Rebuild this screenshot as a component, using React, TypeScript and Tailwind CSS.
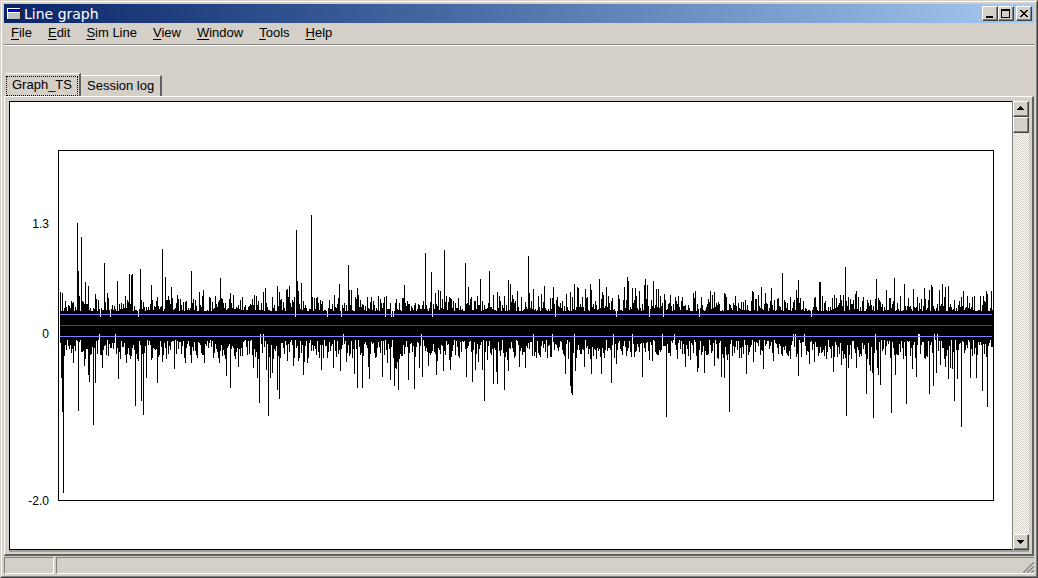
import React, { useState } from 'react';

const MENUS = ['File', 'Edit', 'Sim Line', 'View', 'Window', 'Tools', 'Help'];
const TABS = ['Graph_TS', 'Session log'];

const PLOT = { left: 59, right: 993, top: 151, bottom: 500 };

// [x, tip] of the samples that stand out above the band
const HIGHS: [number, number][] = [
  [60, 292], [62, 293], [77, 223], [78, 271], [81, 237], [85, 282], [88, 286],
  [95, 294], [104, 263], [107, 293], [117, 281], [129, 274], [131, 275],
  [132, 274], [140, 269], [151, 285], [157, 297], [162, 249], [165, 277],
  [168, 296], [171, 287], [177, 295], [191, 271], [199, 292], [203, 290],
  [209, 297], [220, 278], [230, 293], [233, 295], [242, 297], [254, 295],
  [263, 292], [265, 288], [277, 286], [279, 292], [286, 290], [287, 289],
  [289, 286], [296, 230], [297, 281], [298, 291], [301, 283], [311, 215],
  [334, 295], [339, 284], [348, 265], [349, 290], [351, 290], [357, 288],
  [358, 295], [360, 300], [371, 297], [378, 296], [396, 299], [404, 285],
  [425, 253], [431, 272], [435, 293], [438, 290], [440, 291], [444, 250],
  [465, 263], [468, 287], [470, 299], [477, 296], [480, 279], [489, 271],
  [493, 295], [497, 292], [499, 296], [508, 280], [510, 284], [512, 295],
  [517, 291], [521, 297], [528, 256], [529, 293], [533, 289], [541, 294],
  [544, 286], [553, 287], [557, 297], [566, 294], [570, 292], [574, 284],
  [577, 287], [578, 288], [585, 289], [587, 297], [590, 284], [591, 290],
  [599, 279], [602, 292], [603, 295], [606, 287], [608, 296], [618, 295],
  [624, 287], [627, 277], [628, 281], [632, 288], [635, 288], [639, 291],
  [644, 285], [645, 279], [647, 285], [653, 281], [656, 289], [658, 289],
  [664, 294], [670, 295], [678, 296], [693, 293], [695, 291], [701, 297],
  [710, 291], [712, 295], [714, 292], [724, 293], [725, 294], [752, 291],
  [753, 292], [758, 295], [761, 287], [765, 293], [771, 288], [782, 273],
  [796, 290], [798, 280], [819, 282], [820, 282], [832, 298], [834, 295],
  [840, 295], [843, 295], [845, 267], [848, 297], [855, 294], [856, 291],
  [863, 297], [876, 279], [886, 290], [889, 298], [894, 278], [900, 296],
  [904, 284], [913, 289], [917, 297], [924, 288], [929, 290], [931, 285],
  [932, 287], [939, 290], [942, 284], [945, 287], [948, 286], [954, 300],
  [963, 291], [974, 296], [980, 296], [986, 291], [987, 294], [991, 291],
];

// [x, tip] of the samples that stand out below the band
const LOWS: [number, number][] = [
  [61, 378], [62, 412], [63, 493], [73, 363], [78, 411], [84, 366], [88, 375],
  [89, 382], [93, 425], [95, 383], [102, 368], [118, 379], [126, 363],
  [135, 406], [138, 361], [141, 401], [143, 415], [146, 378], [157, 383],
  [162, 362], [174, 369], [185, 363], [191, 363], [204, 363], [219, 363],
  [226, 376], [230, 388], [238, 367], [253, 368], [257, 378], [259, 403],
  [266, 370], [268, 416], [270, 378], [272, 373], [277, 390], [279, 399],
  [287, 361], [293, 366], [298, 361], [303, 375], [304, 362], [307, 363],
  [321, 370], [333, 368], [340, 371], [346, 362], [354, 374], [357, 388],
  [362, 388], [368, 367], [369, 379], [382, 377], [387, 363], [390, 380],
  [394, 386], [395, 368], [396, 369], [397, 362], [398, 390], [408, 380],
  [414, 389], [419, 368], [422, 377], [428, 366], [436, 375], [437, 361],
  [443, 371], [450, 370], [466, 377], [472, 382], [475, 370], [478, 362],
  [482, 370], [484, 401], [493, 384], [496, 372], [497, 384], [504, 390],
  [508, 371], [519, 367], [525, 368], [565, 374], [570, 386], [571, 393],
  [572, 395], [575, 371], [584, 367], [591, 374], [601, 374], [611, 383],
  [616, 364], [642, 377], [649, 360], [652, 361], [666, 417], [685, 367],
  [697, 372], [698, 368], [704, 373], [714, 366], [721, 377], [724, 378],
  [729, 412], [746, 374], [753, 362], [763, 369], [773, 361], [798, 376],
  [809, 364], [814, 362], [833, 372], [841, 365], [846, 416], [848, 368],
  [856, 368], [866, 394], [869, 365], [870, 371], [872, 373], [873, 418],
  [877, 368], [878, 375], [880, 385], [891, 413], [895, 375], [906, 404],
  [912, 369], [916, 377], [929, 394], [933, 386], [936, 373], [940, 365],
  [945, 367], [948, 379], [950, 368], [952, 369], [954, 401], [957, 379],
  [961, 427], [970, 378], [976, 378], [982, 391], [987, 407],
];

const buildTrace = () => {
  const highs = new Map(HIGHS);
  const lows = new Map(LOWS);
  let seed = 20011;
  const random = () => {
    seed = (seed * 16807) % 2147483647;
    return seed / 2147483647;
  };

  let path = '';
  for (let x = 60; x < PLOT.right; x++) {
    const up = random();
    const down = random();
    const gap = random();
    const top =
      highs.get(x) ?? (gap < 0.03 ? 317 : Math.round(311 - 15 * up ** 2));
    const bottom =
      lows.get(x) ?? (gap > 0.97 ? 334 : Math.round(340 + 20 * down ** 1.3));
    path += `M${x} ${top}h1V${bottom}h-1z`;
  }
  return path;
};

const TRACE = buildTrace();

const App: React.FC = () => {
  const [tab, setTab] = useState(TABS[0]);

  return (
    <div className="flex min-h-screen flex-col border border-t-[#d4d0c8] border-r-[#404040] border-b-[#404040] border-l-[#d4d0c8] bg-[#d4d0c8] font-['Liberation_Sans',Arial,sans-serif] text-[13px] text-black">
      <div className="flex flex-1 flex-col border border-t-white border-r-[#808080] border-b-[#808080] border-l-white p-0.5">
        <TitleBar />
        <MenuBar />
        <div className="flex flex-1 flex-col pt-[27px]">
          <div role="tablist" className="flex items-end pl-0.5">
            {TABS.map((name) => (
              <Tab
                key={name}
                name={name}
                selected={name === tab}
                onSelect={() => setTab(name)}
              />
            ))}
          </div>
          <main className="flex flex-1 border-t border-r-2 border-b-2 border-l border-t-white border-r-[#606060] border-b-[#606060] border-l-white pt-1 pr-[3px] pb-0.5 pl-1">
            <div className="flex flex-1 border-b-2 border-[#a0a0a0]">
              <Graph />
              <ScrollBar />
            </div>
          </main>
        </div>
        <StatusBar />
      </div>
    </div>
  );
};

const TitleBar: React.FC = () => {
  return (
    <header className="flex h-[19px] items-center bg-linear-to-r from-[#0a246a] to-[#a6caf0] pr-0.5 pl-[3px] text-white">
      <svg className="h-3 w-3.5" viewBox="0 0 14 12" shapeRendering="crispEdges">
        <path d="M0 0h14v12H0z" fill="#202020" />
        <path d="M0 0h13v11H0z" fill="#fff" />
        <path d="M1 1h12v3H1z" fill="#0000e0" />
        <path d="M1 5h12v6H1z" fill="#c0c0c0" />
      </svg>
      <h1 className="ml-[3px] flex-1 font-['DejaVu_Sans',sans-serif] text-sm leading-4">
        Line graph
      </h1>
      <CaptionButton label="Minimize">
        <path d="M3 9h7v2H3z" />
      </CaptionButton>
      <CaptionButton label="Maximize">
        <path d="M2 2h9v9H2zM3 4v6h7V4z" fillRule="evenodd" />
      </CaptionButton>
      <div className="w-0.5" />
      <CaptionButton label="Close">
        <path d="M3 3h2v1h1v1h2V4h1V3h2v1h-1v1H9v1H8v1h1v1h1v1h1v1H9V9H8V8H6v1H5v1H3V9h1V8h1V7h1V6H5V5H4V4H3z" />
      </CaptionButton>
    </header>
  );
};

const CaptionButton: React.FC<{
  label: string;
  children: React.ReactNode;
}> = ({ label, children }) => {
  return (
    <button
      aria-label={label}
      className="h-[15px] w-4 border border-t-white border-r-[#404040] border-b-[#404040] border-l-white bg-[#d4d0c8] shadow-[inset_-1px_-1px_0_#808080]"
    >
      <svg className="h-[13px] w-3.5" viewBox="0 0 14 13" shapeRendering="crispEdges">
        {children}
      </svg>
    </button>
  );
};

const MenuBar: React.FC = () => {
  return (
    <nav className="flex h-[23px] gap-4 border-b border-white pl-[7px] shadow-[inset_0_-1px_0_#808080]">
      {MENUS.map((menu) => (
        <button key={menu} className="h-5 leading-5">
          <span className="underline decoration-1 underline-offset-2">
            {menu[0]}
          </span>
          {menu.slice(1)}
        </button>
      ))}
    </nav>
  );
};

const Tab: React.FC<{
  name: string;
  selected: boolean;
  onSelect: () => void;
}> = ({ name, selected, onSelect }) => {
  return (
    <button
      role="tab"
      aria-selected={selected}
      onClick={onSelect}
      className={
        selected
          ? 'h-[23px] border-t border-r-2 border-t-white border-r-[#606060] pt-0.5 pr-px'
          : 'h-[21px] border-t border-r-2 border-t-white border-r-[#606060] px-1.5 leading-5'
      }
    >
      {selected ? (
        <span className="block h-5 border border-dotted border-black px-[5px] leading-4">
          {name}
        </span>
      ) : (
        name
      )}
    </button>
  );
};

const Graph: React.FC = () => {
  return (
    <section className="flex flex-1 border-t border-b border-l border-black bg-white pt-12 pr-[18px] pb-12 pl-2">
      <div className="flex w-10 flex-col pr-[9px] text-right text-xs leading-4">
        <span className="flex grow-[66] items-end justify-end">1.3</span>
        <span className="flex grow-[94] items-end justify-end">0</span>
        <span className="-mb-2 flex grow-[151] items-end justify-end">-2.0</span>
      </div>
      <div className="flex flex-1 border border-black">
        <svg
          className="h-full min-h-[349px] w-full"
          viewBox={`${PLOT.left} ${PLOT.top} ${PLOT.right - PLOT.left} ${PLOT.bottom - PLOT.top}`}
          preserveAspectRatio="none"
          shapeRendering="crispEdges"
          role="img"
          aria-label="Graph_TS"
        >
          <path d={TRACE} />
          <path d="M60 314h932v1H60zM60 336h932v1H60z" fill="#8080ff" />
          <path d="M60 325h932v1H60z" fill="#ff0000" />
        </svg>
      </div>
    </section>
  );
};

const ScrollBar: React.FC = () => {
  return (
    <div className="flex w-[17px] flex-col border-l border-[#808080] bg-[repeating-conic-gradient(#ffffff_0_25%,#d4d0c8_0_50%)] bg-size-[2px_2px]">
      <ScrollButton label="Scroll up">
        <path d="M3 8h7v-1H9V6H8V5H7V4H6v1H5v1H4v1H3z" />
      </ScrollButton>
      <div className="h-4 border border-t-white border-r-[#404040] border-b-[#404040] border-l-white bg-[#d4d0c8] shadow-[inset_-1px_-1px_0_#808080]" />
      <div className="flex-1" />
      <ScrollButton label="Scroll down">
        <path d="M3 5h7v1H9v1H8v1H7v1H6V8H5V7H4V6H3z" />
      </ScrollButton>
    </div>
  );
};

const ScrollButton: React.FC<{
  label: string;
  children: React.ReactNode;
}> = ({ label, children }) => {
  return (
    <button
      aria-label={label}
      className="h-4 w-4 border border-t-white border-r-[#404040] border-b-[#404040] border-l-white bg-[#d4d0c8] shadow-[inset_-1px_-1px_0_#808080]"
    >
      <svg className="h-3.5 w-3.5" viewBox="0 0 14 14" shapeRendering="crispEdges">
        {children}
      </svg>
    </button>
  );
};

const StatusBar: React.FC = () => {
  return (
    <footer className="flex h-[18px] gap-0.5 pt-px">
      <div className="w-[50px] border border-t-[#808080] border-r-white border-b-white border-l-[#808080]" />
      <div className="flex flex-1 items-end justify-end border border-r-0 border-t-[#808080] border-b-white border-l-[#808080]">
        <svg className="h-3 w-3" viewBox="0 0 12 12">
          <path d="M0 12L12 0M4 12L12 4M8 12L12 8" stroke="#fff" />
          <path
            d="M1 12L12 1M5 12L12 5M9 12L12 9"
            stroke="#808080"
            strokeWidth="1.5"
          />
        </svg>
      </div>
    </footer>
  );
};

export default App;
